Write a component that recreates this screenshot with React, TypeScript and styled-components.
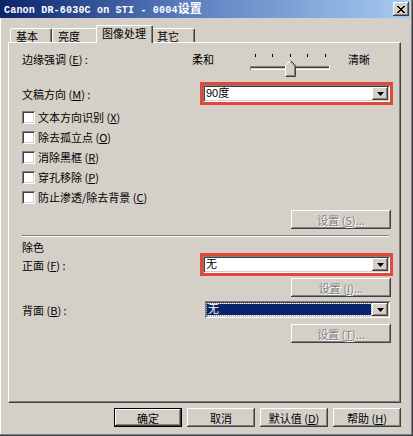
import React from 'react';
import styled, { createGlobalStyle, css } from 'styled-components';

const Global = createGlobalStyle`
  html, body { margin: 0; padding: 0; background: #D4D0C8; }
  body {
    font-family: "Noto Sans CJK SC", "Liberation Sans", sans-serif;
    font-size: 11px;
    color: #000;
  }
  * { box-sizing: border-box; }
`;

const raised = css`
  box-shadow: inset -1px -1px #404040, inset 1px 1px #fff, inset -2px -2px #808080, inset 2px 2px #D4D0C8;
`;
const sunken = css`
  box-shadow: inset 1px 1px #808080, inset -1px -1px #fff, inset 2px 2px #404040, inset -2px -2px #D4D0C8;
`;

const Window = styled.div`
  width: 413px;
  height: 436px;
  display: flex;
  flex-direction: column;
  background: #D4D0C8;
  padding: 0 3px 3px 0;
  box-shadow: inset -1px -1px #404040, inset -2px -2px #808080, inset 1px 0 #fff;
`;

const TitleBar = styled.div`
  height: 18px;
  display: flex;
  align-items: center;
  justify-content: space-between;
  padding: 0 1px 0 4px;
  background: linear-gradient(to right, #0A246A 0%, #5A7EBE 45%, #A6CAF0 100%);
`;

const TitleText = styled.div`
  color: #fff;
  font-family: "Liberation Mono", "Noto Sans CJK SC", monospace;
  font-weight: bold;
  font-size: 10px;
  letter-spacing: 0.2px;
  line-height: 14px;
  white-space: pre;
`;

const TitleCjk = styled.span`
  font-family: "Noto Sans CJK SC", sans-serif;
  font-size: 12px;
  letter-spacing: 0;
`;

const CloseButton = styled.div`
  width: 16px;
  height: 14px;
  background: #D4D0C8;
  ${raised};
  display: flex;
  align-items: center;
  justify-content: center;
`;

const Body = styled.div`
  flex: 1;
  display: flex;
  flex-direction: column;
  padding: 7px 9px 6px 8px;
`;

const TabRow = styled.div`
  height: 17px;
  display: flex;
  align-items: flex-end;
  padding-left: 2px;
  position: relative;
  z-index: 1;
`;

const Tab = styled.div<{ $w: number; $active?: boolean }>`
  width: ${p => p.$w}px;
  height: ${p => (p.$active ? 18 : 14)}px;
  margin: ${p => (p.$active ? '0 -2px -1px -2px' : '0')};
  position: relative;
  z-index: ${p => (p.$active ? 2 : 1)};
  background: #D4D0C8;
  border-top: 1px solid #fff;
  border-left: 1px solid #fff;
  border-right: 1px solid #404040;
  border-radius: 2px 2px 0 0;
  box-shadow: inset -1px 0 #808080;
  padding: 1px 0 0 5px;
  line-height: 12px;
  white-space: nowrap;
`;

const Panel = styled.div`
  flex: 1;
  display: flex;
  flex-direction: column;
  border-top: 1px solid #fff;
  border-left: 1px solid #fff;
  border-right: 1px solid #404040;
  border-bottom: 1px solid #404040;
  box-shadow: inset -1px -1px #808080;
  padding: 9px 9px 0 13px;
`;

const SliderRow = styled.div`
  height: 26px;
  display: flex;
  align-items: flex-start;
`;

const FieldLabel = styled.div<{ $w: number }>`
  width: ${p => p.$w}px;
  flex-shrink: 0;
  line-height: 14px;
  white-space: pre;
`;

const EndLabel = styled.div<{ $gap?: number }>`
  line-height: 14px;
  margin-left: ${p => p.$gap ?? 0}px;
  width: 24px;
`;

const SliderSvg = styled.svg`
  margin-left: 30px;
  display: block;
  flex-shrink: 0;
`;

const ComboRow = styled.div<{ $mt: number; $h: number }>`
  margin-top: ${p => p.$mt}px;
  height: ${p => p.$h}px;
  display: flex;
  align-items: center;
`;

const RedFrame = styled.div`
  width: 193px;
  height: 23px;
  border: 3px solid #E5463C;
  margin-right: -2px;
`;

const Combo = styled.div<{ $w?: number }>`
  width: ${p => (p.$w ? `${p.$w}px` : '100%')};
  height: 17px;
  background: #fff;
  ${sunken};
  display: flex;
  padding: 2px;
`;

const ComboText = styled.div<{ $selected?: boolean }>`
  flex: 1;
  line-height: 11px;
  padding-left: 1px;
  margin: 1px 1px 1px 0;
  font-family: "Liberation Sans", "Noto Sans CJK SC", sans-serif;
  font-size: 11px;
  color: ${p => (p.$selected ? '#fff' : '#000')};
  background: ${p => (p.$selected ? '#0A246A' : 'transparent')};
  outline: ${p => (p.$selected ? '1px dotted #9aa3c0' : 'none')};
`;

const DropButton = styled.div`
  width: 16px;
  height: 13px;
  background: #D4D0C8;
  ${raised};
  display: flex;
  align-items: center;
  justify-content: center;
`;

const CheckList = styled.div`
  margin-top: 2px;
  display: flex;
  flex-direction: column;
`;

const CheckRow = styled.div`
  height: 20px;
  display: flex;
  align-items: center;
`;

const CheckBox = styled.div`
  width: 13px;
  height: 13px;
  background: #fff;
  ${sunken};
  flex-shrink: 0;
`;

const CheckLabel = styled.div`
  margin-left: 3px;
  line-height: 12px;
  white-space: pre;
`;

const SideButton = styled.div<{ $mt: number }>`
  align-self: flex-end;
  width: 100px;
  height: 19px;
  margin-top: ${p => p.$mt}px;
  background: #D4D0C8;
  ${raised};
  display: flex;
  align-items: center;
  justify-content: center;
  color: #808080;
  text-shadow: 1px 1px #fff;
  white-space: pre;
`;

const Separator = styled.div`
  margin-top: 6px;
  margin-right: 2px;
  height: 2px;
  border-top: 1px solid #808080;
  border-bottom: 1px solid #fff;
`;

const SectionLabel = styled.div`
  margin-top: 4px;
  line-height: 12px;
`;

const ButtonRow = styled.div`
  margin-top: 5px;
  display: flex;
  justify-content: flex-end;
  gap: 5px;
`;

const DialogButton = styled.div<{ $default?: boolean }>`
  width: 68px;
  height: 19px;
  background: #D4D0C8;
  display: flex;
  align-items: center;
  justify-content: center;
  white-space: pre;
  ${p =>
    p.$default
      ? css`box-shadow: inset 1px 1px #000, inset -1px -1px #000, inset -2px -2px #404040, inset 2px 2px #fff, inset -3px -3px #808080;`
      : raised};
`;

const Arrow = () => (
  <svg width="7" height="4" viewBox="0 0 7 4">
    <polygon points="0,0 7,0 3.5,4" fill="#000" />
  </svg>
);

const ComboBox = ({ text, w, selected }: { text: string; w?: number; selected?: boolean }) => (
  <Combo $w={w}>
    <ComboText $selected={selected}>{text}</ComboText>
    <DropButton>
      <Arrow />
    </DropButton>
  </Combo>
);

const Slider = () => {
  const ticks = [9, 26, 44, 61, 79];
  return (
    <SliderSvg width="90" height="26" viewBox="0 0 90 26" shapeRendering="crispEdges">
      {ticks.map(x => (
        <rect key={x} x={x} y={2} width={1} height={3} fill="#000" />
      ))}
      <rect x={4} y={14} width={80} height={1} fill="#808080" />
      <rect x={4} y={15} width={80} height={1} fill="#404040" />
      <rect x={4} y={16} width={80} height={1} fill="#D4D0C8" />
      <rect x={4} y={17} width={80} height={1} fill="#fff" />
      <rect x={4} y={14} width={1} height={4} fill="#808080" />
      <rect x={83} y={14} width={1} height={4} fill="#fff" />
      <polygon points="39,13 44,8 50,14 50,25 39,25" fill="#D4D0C8" shapeRendering="auto" />
      <polyline points="39.5,24.5 39.5,13.5 44.5,8.5" fill="none" stroke="#fff" strokeWidth="1" shapeRendering="auto" />
      <polyline points="44.5,8.5 49.5,13.5 49.5,24.5 39.5,24.5" fill="none" stroke="#404040" strokeWidth="1" shapeRendering="auto" />
      <polyline points="44.5,10 48.5,14 48.5,23.5 40.5,23.5" fill="none" stroke="#808080" strokeWidth="1" shapeRendering="auto" />
    </SliderSvg>
  );
};

const checks: [string, string][] = [
  ['文本方向识别', 'X'],
  ['除去孤立点', 'O'],
  ['消除黑框', 'R'],
  ['穿孔移除', 'P'],
  ['防止渗透/除去背景', 'C'],
];

export default function App() {
  return (
    <>
      <Global />
      <Window>
        <TitleBar>
          <TitleText>
            Canon DR-6030C on STI - 0004<TitleCjk>设置</TitleCjk>
          </TitleText>
          <CloseButton>
            <svg width="8" height="7" viewBox="0 0 8 7" shapeRendering="crispEdges">
              <path d="M0 0h2v1h-2zM6 0h2v1h-2zM1 1h2v1h-2zM5 1h2v1h-2zM2 2h4v1h-4zM3 3h2v1h-2zM2 4h4v1h-4zM1 5h2v1h-2zM5 5h2v1h-2zM0 6h2v1h-2zM6 6h2v1h-2z" fill="#000" />
            </svg>
          </CloseButton>
        </TitleBar>
        <Body>
          <TabRow>
            <Tab $w={42}>基本</Tab>
            <Tab $w={46}>亮度</Tab>
            <Tab $w={57} $active>图像处理</Tab>
            <Tab $w={44}>其它</Tab>
          </TabRow>
          <Panel>
            <SliderRow>
              <FieldLabel $w={170}>
                边缘强调 (<u>E</u>) :
              </FieldLabel>
              <EndLabel>柔和</EndLabel>
              <Slider />
              <EndLabel $gap={12}>清晰</EndLabel>
            </SliderRow>

            <ComboRow $mt={4} $h={23}>
              <FieldLabel $w={178}>
                文稿方向 (<u>M</u>) :
              </FieldLabel>
              <RedFrame>
                <ComboBox text="90度" />
              </RedFrame>
            </ComboRow>

            <CheckList>
              {checks.map(([label, key]) => (
                <CheckRow key={key}>
                  <CheckBox />
                  <CheckLabel>
                    {label} (<u>{key}</u>)
                  </CheckLabel>
                </CheckRow>
              ))}
            </CheckList>

            <SideButton $mt={3}>
              设置 (<u>S</u>)...
            </SideButton>

            <Separator />
            <SectionLabel>除色</SectionLabel>

            <ComboRow $mt={0} $h={23}>
              <FieldLabel $w={178}>
                正面 (<u>F</u>) :
              </FieldLabel>
              <RedFrame>
                <ComboBox text="无" />
              </RedFrame>
            </ComboRow>

            <SideButton $mt={2}>
              设置 (<u>I</u>)...
            </SideButton>

            <ComboRow $mt={4} $h={17}>
              <FieldLabel $w={183}>
                背面 (<u>B</u>) :
              </FieldLabel>
              <ComboBox text="无" w={185} selected />
            </ComboRow>

            <SideButton $mt={6}>
              设置 (<u>T</u>)...
            </SideButton>
          </Panel>
          <ButtonRow>
            <DialogButton $default>确定</DialogButton>
            <DialogButton>取消</DialogButton>
            <DialogButton>
              默认值 (<u>D</u>)
            </DialogButton>
            <DialogButton>
              帮助 (<u>H</u>)
            </DialogButton>
          </ButtonRow>
        </Body>
      </Window>
    </>
  );
}
